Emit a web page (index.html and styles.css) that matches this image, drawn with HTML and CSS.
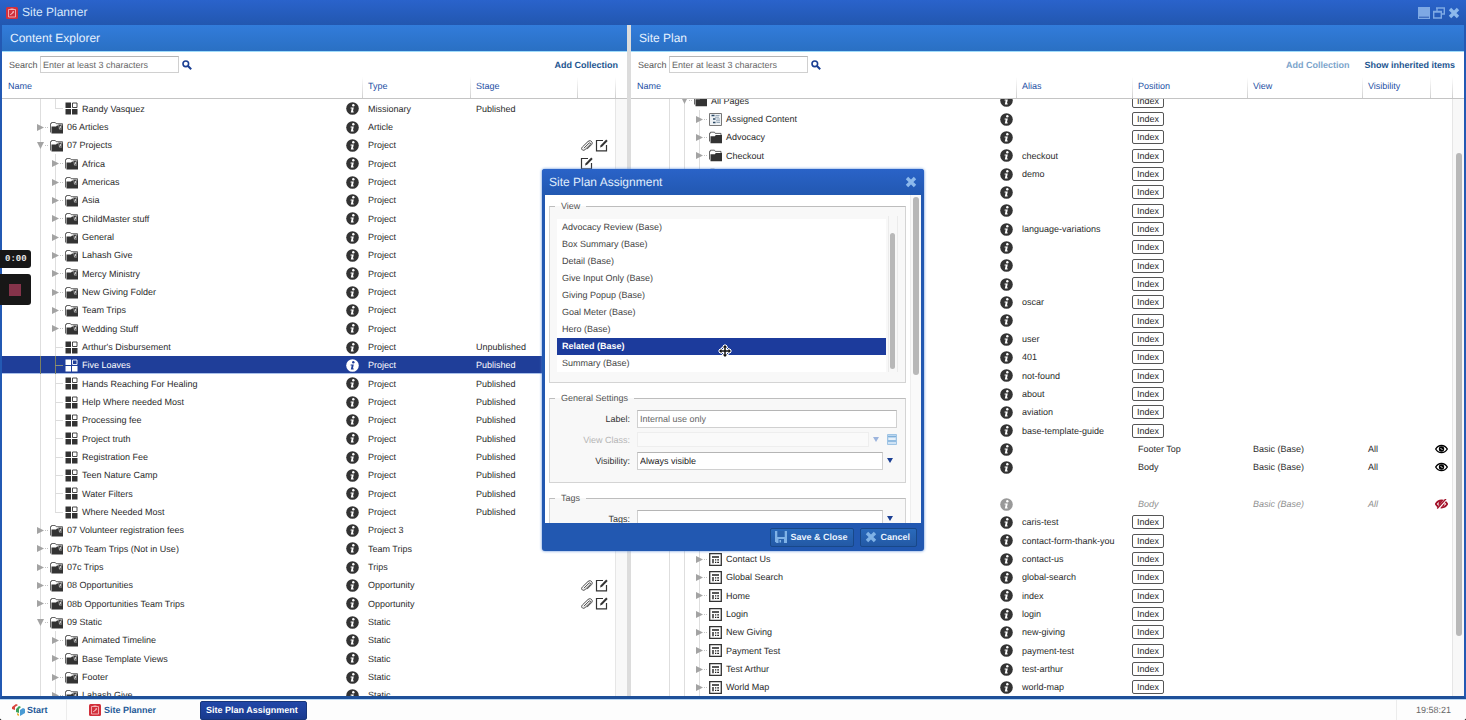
FILE: index.html
```
<!DOCTYPE html>
<html lang="en">
<head>
<meta charset="utf-8">
<title>Site Planner</title>
<link rel="stylesheet" href="styles.css">
</head>
<body>
<svg class="sprite" aria-hidden="true">
  <symbol id="i-folder-lock" viewBox="0 0 13 13"><path d="M.5 11.500V2.500h1V1.500h3.800l.8 1.200H12.500V11" fill="none" stroke="#555" stroke-width=".9"/><path d="M1.500 5.500h4.500l1-1H13v8H1.500z" fill="#333"/><path d="M8.500 4.500V3.500h3v5h-2z" fill="#333" stroke="#999" stroke-width=".6"/><path d="M10.300 4.800v2.400h-1" fill="none" stroke="#fff" stroke-width=".9"/></symbol>
  <symbol id="i-folder" viewBox="0 0 13 13"><path d="M.5 10.500V2.200h1v-1h4l.7 1.200h5.800V4" fill="none" stroke="#555" stroke-width=".9"/><path d="M1.500 5.200h4.300l1-1.200H13v8.300H1.500z" fill="#333"/></symbol>
  <symbol id="i-block" viewBox="0 0 13 13"><path d="M.500.500h5.500v5.500H.500zM.500 7h5.500v5.500H.500zM7 7h5.500v5.500H7z" fill="currentColor"/><path d="M7.500 1h4.500v4.500H7.500z" fill="none" stroke="currentColor" stroke-width=".9"/></symbol>
  <symbol id="i-assigned" viewBox="0 0 13 13"><path d="M.5.5h12v12H.5z" fill="#eef2f5" stroke="#777"/><path d="M2.500 2.500h3M4 6h2.500M4 9.500h2.500" stroke="#2c4a66" stroke-width="1.600"/><path d="M6.500 2.500h4M7.500 6H11M7.500 9.500H11M6 4.200h4M7 7.800h4" stroke="#7d94a8" stroke-width=".8"/></symbol>
  <symbol id="i-page" viewBox="0 0 13 13"><path d="M.7.700h11.600v11.600H.700z" fill="#fff" stroke="#333" stroke-width="1.300"/><path d="M3 4h7M4 6v4.200" stroke="#222" stroke-width="1.400"/><path d="M6 6.300h1.300v1.300H6zM8.200 6.300h1.800v1.300H8.200zM6 8.700h1.300V10H6zM8.200 8.700h1.800V10H8.200z" fill="#222"/></symbol>
  <symbol id="i-clip" viewBox="0 0 13 13"><path d="M3.800 9.300 9 4.200c1-1 2.300.3 1.300 1.300L5 10.600c-2 1.900-4.600-.6-2.700-2.500L8 2.500c2.400-2.200 5.700.8 3.500 3.200L7 10.200" fill="none" stroke="#444" stroke-width="1"/></symbol>
  <symbol id="i-edit" viewBox="0 0 13 13"><path d="M8 1.500H1.500v10.400h10V6" fill="none" stroke="#333" stroke-width="1.200"/><path d="m5 8.500.7-2.300 5.500-5.700 1.500 1.500-5.600 5.700z" fill="#333"/></symbol>
  <symbol id="i-eye" viewBox="0 0 13 10"><path d="M.7 5C3.500.300 9.500.300 12.300 5 9.500 9.700 3.500 9.700.700 5z" fill="none" stroke="#000" stroke-width="1.400"/><circle cx="6.500" cy="5" r="2.700" fill="#000"/><path d="m5.500 4 2 2" stroke="#fff" stroke-width=".9"/></symbol>
  <symbol id="i-eye-off" viewBox="0 0 13 10"><path d="M.7 5C3.500.300 9.500.300 12.300 5 9.500 9.700 3.500 9.700.700 5z" fill="none" stroke="#a3122a" stroke-width="1.800"/><circle cx="6.500" cy="5" r="3" fill="#a3122a"/><path d="M2.500 10.500 11.500-.5" stroke="#fff" stroke-width="2.600"/><path d="M2.200 9.500 11-.2" stroke="#a3122a" stroke-width="1.400"/></symbol>
  <symbol id="i-search" viewBox="0 0 10 10"><circle cx="3.800" cy="3.800" r="2.800" fill="none" stroke="#1b3f93" stroke-width="1.600"/><path d="m6 6 3.200 3.200" stroke="#1b3f93" stroke-width="2"/></symbol>
  <symbol id="i-close" viewBox="0 0 12 12"><path d="m2 2 8 8M10 2l-8 8" stroke="currentColor" stroke-width="3.400"/></symbol>
  <symbol id="i-plan" viewBox="0 0 12 12"><rect width="12" height="12" rx="1.500" fill="#d2303b"/><path d="M2.500 2.500h7v7.500h-7z" fill="none" stroke="#f3b6ba" stroke-width=".9"/><path d="M4.500 1.500h3v1.500h-3z" fill="#f3b6ba"/><path d="M4.500 8c0-2 3.500-1 3-3.500L6 5.500" fill="none" stroke="#f7d0d2" stroke-width=".9"/></symbol>
  <symbol id="i-caret" viewBox="0 0 6 5"><path d="M0 0h6L3 5z" fill="currentColor"/></symbol>
</svg>

<div class="app">
  <header class="titlebar">
    <svg class="app-icon"><use href="#i-plan"/></svg>
    <h1 class="titlebar-text">Site Planner</h1>
    <div class="window-controls">
      <button class="win-btn" aria-label="Minimize"><svg viewBox="0 0 12 12"><path d="M0 0h12v12H0z" fill="#7ea9e4"/><path d="M1 10.200h10" stroke="#2b5bb0" stroke-width="1"/></svg></button>
      <button class="win-btn" aria-label="Restore"><svg viewBox="0 0 12 12"><path d="M4 4V1h7.300v6H9M3 1h9" fill="none" stroke="#7ea9e4" stroke-width="1.400"/><path d="M.7 4.500h7.600V11H.700zM0 5h9" fill="none" stroke="#7ea9e4" stroke-width="1.400"/></svg></button>
      <button class="win-btn" aria-label="Close"><svg><use href="#i-close"/></svg></button>
    </div>
  </header>

  <main class="panes">
    <section class="pane pane-left">
      <h2 class="pane-title">Content Explorer</h2>
      <div class="toolbar">
        <label class="search-label" for="search-content">Search</label>
        <input class="search-input" id="search-content" type="text" placeholder="Enter at least 3 characters">
        <button class="search-btn" aria-label="Search"><svg><use href="#i-search"/></svg></button>
        <a class="action first-action" href="#">Add Collection</a>
      </div>
      <div class="grid">
        <div class="scroller">
          <table class="tree">
            <colgroup><col><col class="c-info"><col class="c-type"><col class="c-stage"><col class="c-act"><col class="c-gutter"></colgroup>
            <thead><tr><th>Name</th><th></th><th class="sep">Type</th><th class="sep">Stage</th><th class="sep"></th><th class="sep"></th></tr></thead>
            <tbody id="content-rows"></tbody>
          </table>
        </div>
        <div class="track"></div>
      </div>
    </section>
    <div class="splitter"></div>
    <section class="pane pane-right">
      <h2 class="pane-title">Site Plan</h2>
      <div class="toolbar">
        <label class="search-label" for="search-plan">Search</label>
        <input class="search-input" id="search-plan" type="text" placeholder="Enter at least 3 characters">
        <button class="search-btn" aria-label="Search"><svg><use href="#i-search"/></svg></button>
        <a class="action first-action muted" href="#">Add Collection</a>
        <a class="action" href="#">Show inherited items</a>
      </div>
      <div class="grid">
        <div class="scroller" id="plan-grid">
          <table class="tree">
            <colgroup><col><col class="c-info"><col class="c-alias"><col class="c-pos"><col class="c-pos"><col class="c-vis"><col class="c-eye"><col class="c-gutter"></colgroup>
            <thead><tr><th>Name</th><th></th><th class="sep">Alias</th><th class="sep">Position</th><th class="sep">View</th><th class="sep">Visibility</th><th class="sep"></th><th class="sep"></th></tr></thead>
            <tbody id="plan-rows"></tbody>
          </table>
        </div>
        <div class="track"><div class="thumb plan-thumb"></div></div>
      </div>
    </section>
  </main>

  <footer class="taskbar">
    <button class="task start"><svg class="start-icon" viewBox="0 0 13 12"><path d="m0 3 4-3 2 1-3 2v3L0 5z" fill="#d8453e"/><path d="m4 5 3-3 2 1-2 2v4L4 8z" fill="#3da35d"/><path d="m8 6 3-2 2 1v4l-5 3z" fill="#4a9bd4"/><path d="m5 9 2 1v2l-2-1z" fill="#e8b13a"/></svg>Start</button>
    <button class="task planner"><svg class="task-icon"><use href="#i-plan"/></svg>Site Planner</button>
    <button class="task current">Site Plan Assignment</button>
    <time class="clock">19:58:21</time>
  </footer>
</div>

<section class="dialog" role="dialog" aria-labelledby="dialog-title">
  <header class="dialog-head">
    <h2 class="dialog-title" id="dialog-title">Site Plan Assignment</h2>
    <button class="win-btn" aria-label="Close dialog"><svg><use href="#i-close"/></svg></button>
  </header>
  <div class="dialog-body">
    <form class="form">
      <fieldset class="group">
        <legend>View</legend>
        <div class="view-box">
          <ul class="view-list" role="listbox" aria-label="View">
            <li role="option">Advocacy Review (Base)</li>
            <li role="option">Box Summary (Base)</li>
            <li role="option">Detail (Base)</li>
            <li role="option">Give Input Only (Base)</li>
            <li role="option">Giving Popup (Base)</li>
            <li role="option">Goal Meter (Base)</li>
            <li role="option">Hero (Base)</li>
            <li role="option" class="picked" aria-selected="true">Related (Base)</li>
            <li role="option">Summary (Base)</li>
          </ul>
          <div class="list-track"><div class="thumb list-thumb"></div></div>
        </div>
      </fieldset>
      <fieldset class="group settings">
        <legend>General Settings</legend>
        <div class="field">
          <label for="f-label">Label:</label>
          <input id="f-label" type="text" placeholder="Internal use only">
        </div>
        <div class="field disabled">
          <label for="f-class">View Class:</label>
          <input id="f-class" type="text" disabled>
          <svg class="caret"><use href="#i-caret"/></svg>
          <svg class="class-icon" viewBox="0 0 10 11"><path d="M.5.5h9v10h-9z" fill="#cfe3f5" stroke="#9fc4e4"/><path d="M1 2.500h8M1 7h8" stroke="#7fb0da" stroke-width="1.500"/><path d="M2 5h6" stroke="#fff"/></svg>
        </div>
        <div class="field">
          <label for="f-vis">Visibility:</label>
          <select id="f-vis"><option>Always visible</option></select>
          <svg class="caret"><use href="#i-caret"/></svg>
        </div>
      </fieldset>
      <fieldset class="group tags">
        <legend>Tags</legend>
        <div class="field">
          <label for="f-tags">Tags:</label>
          <input id="f-tags" type="text">
          <svg class="caret"><use href="#i-caret"/></svg>
        </div>
      </fieldset>
    </form>
    <div class="dialog-track"><div class="thumb dialog-thumb"></div></div>
  </div>
  <footer class="dialog-foot">
    <button class="cmd"><svg viewBox="0 0 12 12"><path d="M0 0h12v12H1.500L0 10.500z" fill="#7fb2e6"/><path d="M2.300 0h7.400v6H2.300z" fill="#2a63ad"/><path d="M3.500 8h5.500v4H3.500z" fill="#2a63ad"/><path d="M4.500 9h1.500v2.500H4.500z" fill="#7fb2e6"/></svg>Save &amp; Close</button>
    <button class="cmd"><svg><use href="#i-close"/></svg>Cancel</button>
  </footer>
  <svg class="move-cursor" viewBox="0 0 14 14"><path d="M7 1v12M1 7h12" stroke="#fff" stroke-width="4"/><path d="m7 0 4 4H3zM7 14l4-4H3zM0 7l4-4v8zM14 7l-4-4v8z" fill="#fff"/><path d="M7 2v10M2 7h10" stroke="#111" stroke-width="1.500"/><path d="m7 1 2.300 2.500H4.700zM7 13l2.300-2.500H4.700zM1 7l2.500-2.300v4.600zM13 7l-2.500-2.300v4.600z" fill="#111"/></svg>
</section>

<aside class="recorder">
  <div class="rec-time">0:00</div>
  <button class="rec-stop" aria-label="Stop recording"><span></span></button>
</aside>
<script src="script.js"></script>
</body>
</html>
```
FILE: styles.css
```
* { box-sizing: border-box; }
html { background: #111; }
body {
  margin: 0;
  height: 100vh;
  overflow: hidden;
  position: relative;
  font-family: "Liberation Sans", Arial, Helvetica, sans-serif;
  font-size: 9px;
  color: #2b2b2b;
  text-rendering: geometricPrecision;
}
button { font: inherit; color: inherit; background: none; border: 0; padding: 0; display: flex; align-items: center; }
input, select, button { text-rendering: inherit; }
svg { display: block; flex: none; }
h1, h2 { margin: 0; font-weight: 400; }
a { text-decoration: none; }
.sprite { position: absolute; width: 0; height: 0; }
.cut { fill: #fff; }

.app { display: flex; flex-direction: column; height: 100%; background: #fff; border-radius: 0 0 3px 3px; overflow: hidden; }

.titlebar {
  display: flex; align-items: center; height: 25px; flex: none;
  padding: 0 6px; background: linear-gradient(#2a63cb, #2257b0);
}
.app-icon { width: 12px; height: 12px; }
.titlebar-text { font-size: 12px; line-height: 12px; margin: 0 0 1px 4px; color: #d9e9fb; }
.window-controls { display: flex; gap: 3px; margin-left: auto; }
.win-btn { width: 12px; height: 12px; color: #8db9ec; }
.win-btn svg { width: 12px; height: 12px; }

.panes { flex: 1; min-height: 0; display: flex; border: solid #2359b3; border-width: 0 2px 3px; border-bottom-color: #1e5099; }
.pane { display: flex; flex-direction: column; min-width: 0; min-height: 0; }
.pane-left { flex: 625; }
.pane-right { flex: 833; }
.splitter { width: 4px; background: #dcdcdc; }
.pane-title {
  flex: none; height: 27px; line-height: 26px; padding-left: 8px;
  font-size: 12px; color: #e6f2ff;
  background: linear-gradient(#327cdb, #2a70c3); border-bottom: 1px solid #9fdcfa;
}
.toolbar { flex: none; display: flex; align-items: center; height: 25px; padding: 0 9px 0 7px; }
.search-label { width: 31px; color: #555; }
.search-input {
  width: 139px; height: 17px; padding: 0 2px;
  font: inherit; border: 1px solid #d0d0d0; border-top-color: #b5b5b5; border-radius: 0;
}
input::placeholder { color: #666; opacity: 1; }
.search-btn { margin-left: 3px; }
.search-btn svg { width: 10px; height: 10px; }
.action { font-weight: 700; color: #1c5590; margin-left: 15px; }
.first-action { margin-left: auto; }
.muted { color: #7ba4cb; }

.grid { flex: 1; min-height: 0; position: relative; }
.scroller { height: 100%; overflow: hidden; }
.tree { width: 100%; table-layout: fixed; border-spacing: 0; }
.c-info { width: 19px; }
.c-type { width: 108px; }
.c-stage { width: 107px; }
.c-act { width: 38px; }
.c-gutter { width: 12px; }
.c-alias { width: 116px; }
.c-pos { width: 115px; }
.c-vis { width: 68px; }
.c-eye { width: 22px; }
.tree thead { position: sticky; top: 0; z-index: 1; background: #fff; }
.tree th {
  height: 22px; padding: 0 0 4px 6px; text-align: left; font-weight: 400; color: #2450a5;
  border-bottom: 1px solid #c4c4c4;
}
.sep { background: linear-gradient(#fff, #d0d0d0) 0 0 / 1px 100% no-repeat; }
.tree td { padding: 0 0 0 6px; white-space: nowrap; height: 18px; }
.tree tr:nth-child(3n+1) td { height: 19px; }
.tree td.name, .tree td.flush { padding: 0; }
.node { display: flex; align-items: center; height: 18px; padding-left: 31px; }
tr:nth-child(3n+1) .node { height: 19px; }
.guide { flex: none; width: 15px; align-self: stretch; display: flex; align-items: center; background: linear-gradient(#dedede, #dedede) 7px 0 / 1px 100% no-repeat; }
.guide.last { background-size: 1px 50%; }
.guide.branch::after { content: ""; width: 8px; height: 1px; margin-left: 7px; background: #dcdcdc; }
.toggle { width: 15px; padding-left: 4px; color: #a3a3a3; }
.toggle::after { content: ""; border-top: 1px dotted #c4c4c4; flex: 1; margin-left: 1px; }
.toggle svg { width: 7px; height: 7px; }
.node-icon { width: 13px; height: 13px; margin: 0 4px 0 2px; color: #333; }
.info { margin: 0 auto; color: #333; }
.info svg { width: 13px; height: 13px; }
.acts { display: flex; gap: 2px; padding-left: 3px; }
.acts svg { width: 13px; height: 13px; }
.eye { width: 13px; height: 10px; margin: 0 auto; }
.index { display: block; width: 32px; height: 14px; line-height: 12px; border: 1px solid #555; border-radius: 2px; text-align: center; }
.chosen td { background: #1f3e99; color: #fff; box-shadow: inset 0 -1px #a9c0ea; }
.chosen .guide { background-image: linear-gradient(#7d8060, #7d8060); }
.chosen .guide.branch::after { background: #8d927f; }
.chosen .node-icon, .chosen .info { color: #fff; }
.chosen .cut { fill: #1f3e99; }
.inherited { color: #909090; font-style: italic; }
.inherited .info { color: #999; }
.track { position: absolute; top: 22px; right: 0; bottom: 0; width: 12px; background: #f8f8f8; border-left: 1px solid #e6e6e6; }
.thumb { border-radius: 4px; background: #b8b8b8; }
.plan-thumb { position: absolute; top: 9%; height: 81%; left: 3px; width: 6px; }

.taskbar { flex: none; height: 21px; display: flex; align-items: center; font-weight: 700; color: #1f5a98; background: #fdfdfd; border-top: 1px solid #b9d7f3; }
.start { width: 67px; height: 100%; padding-left: 12px; border-right: 1px solid #ececec; gap: 2px; }
.start-icon { width: 13px; height: 12px; }
.planner { width: 133px; padding-left: 22px; gap: 3px; }
.task-icon { width: 12px; height: 12px; }
.current { width: 107px; height: 19px; padding-left: 5px; color: #fff; background: linear-gradient(#2247a8, #193a8e); border: 1px solid #173579; border-radius: 2px; }
.clock { margin-left: auto; height: 100%; line-height: 20px; width: 70px; padding-left: 19px; border-left: 1px solid #ececec; font-weight: 400; color: #666; }

.dialog {
  position: absolute; left: 542px; top: 169px; width: 382px; height: 382px;
  display: flex; flex-direction: column; padding: 0 3px; background: #2258b1;
  border-radius: 3px; box-shadow: 0 0 3px #4f86d6;
}
.dialog-head { flex: none; height: 26px; margin: 0 -3px; padding: 0 7px; display: flex; align-items: center; justify-content: space-between; background: linear-gradient(#2a63c8, #2258b1); border-radius: 3px 3px 0 0; }
.dialog-title { font-size: 12px; color: #e0eefc; }
.dialog-body { flex: 1; min-height: 0; display: flex; background: #fff; overflow: hidden; }
.form { flex: 1; min-width: 0; padding: 5px 4px 0; }
.dialog-track { flex: none; width: 11px; padding: 2px; background: #fafafa; border-left: 1px solid #eee; }
.dialog-thumb { height: 178px; }
.group { margin: 0 0 9px; padding: 0 7px 10px; min-width: 0; background: #f8f8f8; border: 1px solid #d4d4d4; border-top-color: #bdbdbd; }
.group legend { margin-left: -2px; padding: 0 6px; line-height: 12px; color: #555; }
.view-box { display: flex; justify-content: space-between; padding-top: 4px; }
.view-list { flex: 1; margin: 3px 0 0; padding: 0; list-style: none; background: #fff; line-height: 17px; color: #444; }
.view-list li { padding-left: 5px; }
.view-list .picked { background: #1c3b9c; color: #fff; font-weight: 700; }
.list-track { flex: none; width: 10px; margin-left: 2px; padding: 17px 2px 3px 1px; border: solid #ebebeb; border-width: 0 1px; }
.list-thumb { height: 100%; }
.field { display: flex; align-items: center; height: 21px; padding-right: 1px; }
.group legend + .field { margin-top: 4px; }
.field label { width: 73px; margin-right: 7px; text-align: right; color: #333; }
.field input, .field select {
  flex: 1; min-width: 0; height: 18px; padding: 0 2px; appearance: none; border-radius: 0;
  font: inherit; color: #222; background: #fff; border: 1px solid #d0d0d0; border-top-color: #b5b5b5;
}
.caret { width: 6px; height: 5px; margin: 0 4px; color: #1b3f93; }
.field.disabled label { color: #b5b5b5; }
.field.disabled input { height: 15px; background: #fafafa; border-color: #eee; }
.disabled .caret { color: #9cb4dd; }
.class-icon { width: 10px; height: 11px; margin-left: 4px; }
.settings { padding-bottom: 11px; }
.dialog-foot { flex: none; height: 28px; display: flex; align-items: center; justify-content: flex-end; gap: 6px; padding-right: 4px; }
.cmd { height: 19px; padding: 0 6px 0 4px; gap: 3px; font-weight: 700; color: #eaf4ff; background: linear-gradient(#2a6abb, #2359a5); border: 1px solid #184889; border-radius: 2px; }
.cmd svg { width: 12px; height: 12px; color: #7fb2e6; }
.move-cursor { position: absolute; left: 176px; top: 175px; width: 14px; height: 14px; }

.recorder { position: absolute; left: 0; top: 250px; display: flex; flex-direction: column; gap: 6px; }
.rec-time { width: 31px; height: 18px; padding-left: 5px; font: 700 9px/18px "Liberation Mono", monospace; color: #eee; background: #171717; border-radius: 0 3px 3px 0; }
.rec-stop { width: 31px; height: 31px; padding-left: 9px; background: #171717; border-radius: 0 3px 3px 0; }
.rec-stop span { width: 12px; height: 12px; background: #84334a; }
```
FILE: script.js
```
// Row fields: depth, kind, name, type, stage, actions, flag
const content = [
  [2, 'block', 'Randy Vasquez', 'Missionary', 'Published', '', 'last'],
  [1, 'shut', '06 Articles', 'Article'],
  [1, 'open', '07 Projects', 'Project', '', 'clip edit'],
  [2, 'shut', 'Africa', 'Project', '', 'edit'],
  [2, 'shut', 'Americas', 'Project'],
  [2, 'shut', 'Asia', 'Project'],
  [2, 'shut', 'ChildMaster stuff', 'Project'],
  [2, 'shut', 'General', 'Project'],
  [2, 'shut', 'Lahash Give', 'Project'],
  [2, 'shut', 'Mercy Ministry', 'Project'],
  [2, 'shut', 'New Giving Folder', 'Project'],
  [2, 'shut', 'Team Trips', 'Project'],
  [2, 'shut', 'Wedding Stuff', 'Project'],
  [2, 'block', "Arthur's Disbursement", 'Project', 'Unpublished'],
  [2, 'block', 'Five Loaves', 'Project', 'Published', '', 'chosen'],
  [2, 'block', 'Hands Reaching For Healing', 'Project', 'Published'],
  [2, 'block', 'Help Where needed Most', 'Project', 'Published'],
  [2, 'block', 'Processing fee', 'Project', 'Published'],
  [2, 'block', 'Project truth', 'Project', 'Published'],
  [2, 'block', 'Registration Fee', 'Project', 'Published'],
  [2, 'block', 'Teen Nature Camp', 'Project', 'Published'],
  [2, 'block', 'Water Filters', 'Project', 'Published'],
  [2, 'block', 'Where Needed Most', 'Project', 'Published', '', 'last'],
  [1, 'shut', '07 Volunteer registration fees', 'Project 3'],
  [1, 'shut', '07b Team Trips (Not in Use)', 'Team Trips'],
  [1, 'shut', '07c Trips', 'Trips'],
  [1, 'shut', '08 Opportunities', 'Opportunity', '', 'clip edit'],
  [1, 'shut', '08b Opportunities Team Trips', 'Opportunity', '', 'clip edit'],
  [1, 'open', '09 Static', 'Static'],
  [2, 'shut', 'Animated Timeline', 'Static'],
  [2, 'shut', 'Base Template Views', 'Static'],
  [2, 'shut', 'Footer', 'Static'],
  [2, 'shut', 'Lahash Give', 'Static']
];

// Row fields: icon, name, alias, position, view, visibility, eye
const plan = [
  ['folder', 'All Pages', '', 'Index'],
  ['assigned', 'Assigned Content', '', 'Index'],
  ['folder', 'Advocacy', '', 'Index'],
  ['folder', 'Checkout', 'checkout', 'Index'],
  ['folder', '', 'demo', 'Index'],
  ['', '', '', 'Index'],
  ['', '', '', 'Index'],
  ['', '', 'language-variations', 'Index'],
  ['', '', '', 'Index'],
  ['', '', '', 'Index'],
  ['', '', '', 'Index'],
  ['', '', 'oscar', 'Index'],
  ['', '', '', 'Index'],
  ['', '', 'user', 'Index'],
  ['', '', '401', 'Index'],
  ['', '', 'not-found', 'Index'],
  ['', '', 'about', 'Index'],
  ['', '', 'aviation', 'Index'],
  ['', '', 'base-template-guide', 'Index'],
  ['', '', '', 'Footer Top', 'Basic (Base)', 'All', 'eye'],
  ['', '', '', 'Body', 'Basic (Base)', 'All', 'eye'],
  null,
  ['', '', '', 'Body', 'Basic (Base)', 'All', 'eye-off'],
  ['', '', 'caris-test', 'Index'],
  ['', '', 'contact-form-thank-you', 'Index'],
  ['page', 'Contact Us', 'contact-us', 'Index'],
  ['page', 'Global Search', 'global-search', 'Index'],
  ['page', 'Home', 'index', 'Index'],
  ['page', 'Login', 'login', 'Index'],
  ['page', 'New Giving', 'new-giving', 'Index'],
  ['page', 'Payment Test', 'payment-test', 'Index'],
  ['page', 'Test Arthur', 'test-arthur', 'Index'],
  ['page', 'World Map', 'world-map', 'Index'],
  null
];

const icon = (id, cls) => `<svg class="${cls || ''}"><use href="#i-${id}"/></svg>`;
const arrow = open => `<button class="toggle" aria-label="${open ? 'Collapse' : 'Expand'}"><svg viewBox="0 0 7 7"><path d="${open ? 'M0 0h7L3.500 7z' : 'M0 0v7l7-3.500z'}" fill="currentColor"/></svg></button>`;
const guide = (inner, cls) => `<span class="guide ${cls || ''}">${inner || ''}</span>`;
const infoSvg = '<svg viewBox="0 0 13 13"><circle cx="6.500" cy="6.500" r="6.300" fill="currentColor"/><circle cx="7.300" cy="3.300" r="1.200" class="cut"/><path d="M4.700 5.400h3.100L6.900 9.600h1l-.3 1H4.800l.9-4.200H4.500z" class="cut"/></svg>';
const info = `<button class="info" aria-label="Info">${infoSvg}</button>`;

document.getElementById('content-rows').innerHTML = content.map(([depth, kind, name, type, stage, acts, flag]) => {
  const block = kind === 'block';
  const own = block ? guide('', 'branch ' + (flag === 'last' ? 'last' : '')) : guide(arrow(kind === 'open'));
  return `<tr class="${flag === 'chosen' ? 'chosen' : ''}">
    <td class="name"><div class="node">${depth === 2 ? guide() : ''}${own}${icon(block ? 'block' : 'folder-lock', 'node-icon')}<span>${name}</span></div></td>
    <td class="flush">${info}</td><td>${type}</td><td>${stage || ''}</td>
    <td class="flush"><div class="acts">${(acts || '').split(' ').filter(Boolean).map(a => icon(a)).join('')}</div></td><td></td></tr>`;
}).join('');

document.getElementById('plan-rows').innerHTML = plan.map((row, i) => {
  if (!row) return `<tr><td class="name"><div class="node">${guide()}${guide()}${guide()}</div></td>${'<td></td>'.repeat(7)}</tr>`;
  const [ic, name, alias, pos, view, vis, eye] = row;
  const tree = guide() + (i ? guide() : '') + guide(ic ? arrow(i === 0) : '');
  return `<tr class="${eye === 'eye-off' ? 'inherited' : ''}">
    <td class="name"><div class="node">${tree}${ic ? icon(ic, 'node-icon') : ''}<span>${name}</span></div></td>
    <td class="flush">${info}</td><td>${alias}</td>
    ${pos === 'Index' ? '<td class="flush"><span class="index">Index</span></td>' : `<td>${pos}</td>`}
    <td>${view || ''}</td><td>${vis || ''}</td><td class="flush">${eye ? icon(eye, 'eye') : ''}</td><td></td></tr>`;
}).join('');

document.getElementById('plan-grid').scrollTop = 8;
```
